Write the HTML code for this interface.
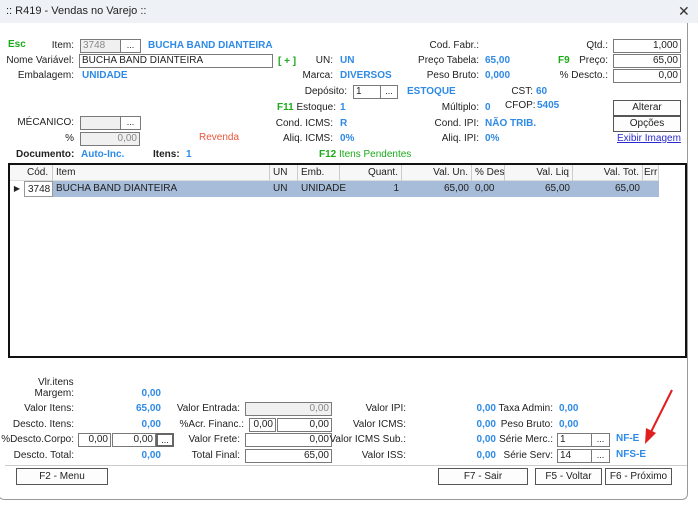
<!DOCTYPE html><html><head><meta charset="utf-8"><style>
*{margin:0;padding:0;box-sizing:border-box}
body{width:698px;height:505px;background:#fff;font-family:"Liberation Sans",Tahoma,sans-serif;font-size:10px;color:#222;position:relative;overflow:hidden}
div,span{position:absolute;white-space:nowrap}
.r{text-align:right}
.b{color:#2e8ae6;font-weight:bold}
.g{color:#1aaa1a;font-weight:bold}
.in{border:1px solid #7a7a7a;background:#fff;height:14px;line-height:12px;padding:0 2px;font-size:10px}
.gr{background:#f0f0f0;color:#888}
.bt{border:1px solid #7a7a7a;background:#fff;height:14px;line-height:11px;text-align:center;font-size:9px}
.btn{border:1px solid #555;background:#fdfdfd;text-align:center;height:17px;line-height:15px}
.th{top:165px;height:16px;line-height:16px;border-right:1px solid #ccc;padding:0 3px}
.td{top:181px;height:16px;line-height:16px;padding:0 3px}
</style></head><body>
<div style="left:0;top:0;width:698px;height:23px;background:#eef2f7"></div>
<div style="left:6px;top:5px;font-size:11px">:: R419 - Vendas no Varejo ::</div>
<div style="left:678px;top:3px;font-size:14px;color:#333">✕</div>
<div style="left:-2px;top:23px;width:690px;height:477px;border:1px solid #999;border-top:none;border-radius:0 0 6px 6px"></div>

<div class="g" style="left:8px;top:39px">Esc</div>
<div class="r" style="left:0;width:74px;top:40px">Item:</div>
<div class="in gr" style="left:80px;top:39px;width:41px">3748</div><div class="bt" style="left:120px;top:39px;width:21px">...</div>
<div class="b" style="left:148px;top:40px">BUCHA BAND DIANTEIRA</div>
<div class="r" style="left:0;width:74px;top:55px">Nome Variável:</div>
<div class="in" style="left:79px;top:54px;width:194px">BUCHA BAND DIANTEIRA</div>
<div class="g" style="left:278px;top:56px">[ + ]</div>
<div class="r" style="left:260px;width:73px;top:55px">UN:</div><div class="b" style="left:340px;top:55px">UN</div>
<div class="r" style="left:0;width:74px;top:70px">Embalagem:</div><div class="b" style="left:82px;top:70px">UNIDADE</div>
<div class="r" style="left:260px;width:73px;top:70px">Marca:</div><div class="b" style="left:340px;top:70px">DIVERSOS</div>
<div class="r" style="left:260px;width:87px;top:86px">Depósito:</div>
<div class="in" style="left:353px;top:85px;width:28px">1</div><div class="bt" style="left:380px;top:85px;width:18px">...</div>
<div class="b" style="left:407px;top:86px">ESTOQUE</div>
<div class="r" style="left:260px;width:76px;top:102px"><span class="g" style="position:static">F11</span> Estoque:</div><div class="b" style="left:340px;top:102px">1</div>
<div class="r" style="left:0;width:74px;top:117px">MÉCANICO:</div>
<div class="in gr" style="left:80px;top:116px;width:41px"></div><div class="bt" style="left:120px;top:116px;width:21px">...</div>
<div class="r" style="left:260px;width:73px;top:118px">Cond. ICMS:</div><div class="b" style="left:340px;top:118px">R</div>
<div class="r" style="left:0;width:74px;top:133px">%</div>
<div class="in gr r" style="left:80px;top:132px;width:60px">0,00</div>
<div style="left:199px;top:132px;color:#e8553a">Revenda</div>
<div class="r" style="left:260px;width:73px;top:133px">Aliq. ICMS:</div><div class="b" style="left:340px;top:133px">0%</div>
<div style="left:16px;top:149px;font-weight:bold">Documento:</div><div class="b" style="left:81px;top:149px">Auto-Inc.</div>
<div style="left:153px;top:149px;font-weight:bold">Itens:</div><div class="b" style="left:186px;top:149px">1</div>
<div class="g" style="left:319px;top:149px">F12 <span style="position:static;font-weight:normal">Itens Pendentes</span></div>

<div class="r" style="left:380px;width:99px;top:40px">Cod. Fabr.:</div>
<div class="r" style="left:380px;width:99px;top:55px">Preço Tabela:</div><div class="b" style="left:485px;top:55px">65,00</div>
<div class="r" style="left:380px;width:99px;top:70px">Peso Bruto:</div><div class="b" style="left:485px;top:70px">0,000</div>
<div class="r" style="left:480px;width:53px;top:86px">CST:</div><div class="b" style="left:536px;top:86px">60</div>
<div class="r" style="left:380px;width:99px;top:102px">Múltiplo:</div><div class="b" style="left:485px;top:102px">0</div>
<div style="left:505px;top:100px">CFOP:</div><div class="b" style="left:537px;top:100px">5405</div>
<div class="r" style="left:380px;width:99px;top:118px">Cond. IPI:</div><div class="b" style="left:485px;top:118px">NÃO TRIB.</div>
<div class="r" style="left:380px;width:99px;top:133px">Aliq. IPI:</div><div class="b" style="left:485px;top:133px">0%</div>
<div class="r" style="left:540px;width:68px;top:40px">Qtd.:</div><div class="in r" style="left:613px;top:39px;width:68px">1,000</div>
<div class="g" style="left:558px;top:55px">F9</div>
<div class="r" style="left:540px;width:68px;top:55px">Preço:</div><div class="in r" style="left:613px;top:54px;width:68px">65,00</div>
<div class="r" style="left:540px;width:68px;top:70px">% Descto.:</div><div class="in r" style="left:613px;top:69px;width:68px">0,00</div>
<div class="btn" style="left:613px;top:100px;width:68px;height:16px;line-height:14px">Alterar</div>
<div class="btn" style="left:613px;top:116px;width:68px;height:16px;line-height:14px">Opções</div>
<div style="left:617px;top:133px;color:#2a2ad0;text-decoration:underline">Exibir Imagem</div>

<div style="left:8px;top:163px;width:679px;height:195px;border:2px solid #111;background:#fff"></div>
<div style="left:10px;top:165px;width:649px;height:16px;background:#f7f7f7;border-bottom:1px solid #ddd"></div>
<div class="th" style="left:24px;width:29px">Cód.</div><div class="th" style="left:53px;width:217px">Item</div>
<div class="th" style="left:270px;width:28px">UN</div><div class="th" style="left:298px;width:42px">Emb.</div>
<div class="th r" style="left:340px;width:62px">Quant.</div><div class="th r" style="left:402px;width:70px">Val. Un.</div>
<div class="th" style="left:472px;width:33px">% Des</div><div class="th r" style="left:505px;width:68px">Val. Liq</div>
<div class="th r" style="left:573px;width:70px">Val. Tot.</div><div class="th" style="left:643px;width:16px;padding:0 1px">Err</div>
<div style="left:10px;top:181px;width:14px;height:16px;line-height:16px;font-size:8px;text-align:center">▶</div>
<div style="left:53px;top:181px;width:606px;height:16px;background:#a6bcd8"></div>
<div class="td" style="left:24px;width:29px;background:#fff;border:1px solid #999">3748</div>
<div class="td" style="left:53px">BUCHA BAND DIANTEIRA</div><div class="td" style="left:270px">UN</div><div class="td" style="left:298px">UNIDADE</div>
<div class="td r" style="left:340px;width:62px">1</div><div class="td r" style="left:402px;width:70px">65,00</div>
<div class="td" style="left:472px">0,00</div><div class="td r" style="left:505px;width:68px">65,00</div><div class="td r" style="left:573px;width:70px">65,00</div>

<div style="left:38px;top:377px">Vlr.itens</div>
<div class="r" style="left:0;width:74px;top:388px">Margem:</div><div class="b r" style="left:100px;width:61px;top:388px">0,00</div>
<div class="r" style="left:0;width:74px;top:403px">Valor Itens:</div><div class="b r" style="left:100px;width:61px;top:403px">65,00</div>
<div class="r" style="left:0;width:74px;top:419px">Descto. Itens:</div><div class="b r" style="left:100px;width:61px;top:419px">0,00</div>
<div class="r" style="left:0;width:74px;top:434px">%Descto.Corpo:</div>
<div class="r" style="left:0;width:74px;top:450px">Descto. Total:</div><div class="b r" style="left:100px;width:61px;top:450px">0,00</div>
<div class="in r" style="left:78px;top:433px;width:33px">0,00</div><div class="in r" style="left:112px;top:433px;width:44px">0,00</div><div class="bt" style="left:156px;top:433px;width:18px;border:2px solid #666">...</div>
<div class="r" style="left:170px;width:70px;top:403px">Valor Entrada:</div><div class="in gr r" style="left:245px;top:402px;width:87px">0,00</div>
<div class="r" style="left:170px;width:74px;top:419px">%Acr. Financ.:</div><div class="in r" style="left:249px;top:418px;width:27px">0,00</div><div class="in r" style="left:277px;top:418px;width:55px">0,00</div>
<div class="r" style="left:170px;width:70px;top:434px">Valor Frete:</div><div class="in r" style="left:245px;top:433px;width:87px">0,00</div>
<div class="r" style="left:170px;width:70px;top:450px">Total Final:</div><div class="in r" style="left:245px;top:449px;width:87px">65,00</div>
<div class="r" style="left:320px;width:86px;top:403px">Valor IPI:</div><div class="b r" style="left:440px;width:56px;top:403px">0,00</div>
<div class="r" style="left:320px;width:86px;top:419px">Valor ICMS:</div><div class="b r" style="left:440px;width:56px;top:419px">0,00</div>
<div class="r" style="left:320px;width:86px;top:434px">Valor ICMS Sub.:</div><div class="b r" style="left:440px;width:56px;top:434px">0,00</div>
<div class="r" style="left:320px;width:86px;top:450px">Valor ISS:</div><div class="b r" style="left:440px;width:56px;top:450px">0,00</div>
<div class="r" style="left:490px;width:63px;top:403px">Taxa Admin:</div><div class="b" style="left:559px;top:403px">0,00</div>
<div class="r" style="left:490px;width:63px;top:419px">Peso Bruto:</div><div class="b" style="left:559px;top:419px">0,00</div>
<div class="r" style="left:490px;width:63px;top:434px">Série Merc.:</div><div class="in" style="left:557px;top:433px;width:35px">1</div><div class="bt" style="left:591px;top:433px;width:19px">...</div><div class="b" style="left:616px;top:433px">NF-E</div>
<div class="r" style="left:490px;width:63px;top:450px">Série Serv:</div><div class="in" style="left:557px;top:449px;width:35px">14</div><div class="bt" style="left:591px;top:449px;width:19px">...</div><div class="b" style="left:616px;top:449px">NFS-E</div>
<div style="left:5px;top:465px;width:682px;height:1px;background:#ccc"></div>
<div class="btn" style="left:16px;top:468px;width:92px">F2 - Menu</div>
<div class="btn" style="left:438px;top:468px;width:90px">F7 - Sair</div>
<div class="btn" style="left:535px;top:468px;width:67px">F5 - Voltar</div>
<div class="btn" style="left:605px;top:468px;width:67px">F6 - Próximo</div>
<svg style="position:absolute;left:0;top:0" width="698" height="505"><line x1="672" y1="390" x2="650" y2="434" stroke="#e02020" stroke-width="2"/><polygon points="645,444 646,428 656,433" fill="#e02020"/></svg>
</body></html>
